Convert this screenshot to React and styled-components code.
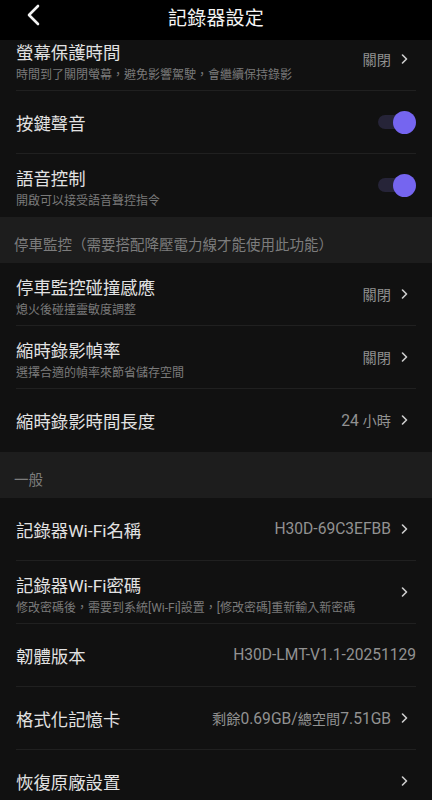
import React from "react";
import styled, { createGlobalStyle } from "styled-components";

const GlobalStyle = createGlobalStyle`
  html, body {
    margin: 0;
    padding: 0;
    background: #111111;
  }
  body {
    font-family: Roboto, "Noto Sans CJK TC", "Noto Sans", sans-serif;
    -webkit-font-smoothing: antialiased;
  }
`;

const sections = [
  {
    title: null,
    rows: [
      { title: "螢幕保護時間", sub: "時間到了關閉螢幕，避免影響駕駛，會繼續保持錄影", value: "關閉", arrow: true },
      { title: "按鍵聲音", toggle: true },
      { title: "語音控制", sub: "開啟可以接受語音聲控指令", toggle: true },
    ],
  },
  {
    title: "停車監控（需要搭配降壓電力線才能使用此功能）",
    rows: [
      { title: "停車監控碰撞感應", sub: "熄火後碰撞靈敏度調整", value: "關閉", arrow: true },
      { title: "縮時錄影幀率", sub: "選擇合適的幀率來節省儲存空間", value: "關閉", arrow: true },
      { title: "縮時錄影時間長度", value: "24 小時", arrow: true },
    ],
  },
  {
    title: "一般",
    rows: [
      { title: "記錄器Wi-Fi名稱", value: "H30D-69C3EFBB", arrow: true },
      { title: "記錄器Wi-Fi密碼", sub: "修改密碼後，需要到系統[Wi-Fi]設置，[修改密碼]重新輸入新密碼", arrow: true },
      { title: "韌體版本", value: "H30D-LMT-V1.1-20251129" },
      { title: "格式化記憶卡", value: "剩餘0.69GB/總空間7.51GB", arrow: true },
      { title: "恢復原廠設置", arrow: true },
    ],
  },
];

// the device draws latin digits a bit larger than the chinese glyphs
const splitCjk = (text) =>
  text.split(/([\u3000-\u9fff\uff00-\uffef]+)/).map((part, i) =>
    /[\u3000-\u9fff\uff00-\uffef]/.test(part) ? <Cjk key={i}>{part}</Cjk> : part
  );

const Chevron = () => (
  <ChevronIcon width="7" height="10" viewBox="0 0 7 10">
    <path d="M1.5 1 L5.5 5 L1.5 9" fill="none" stroke="#cfcfcf" strokeWidth="1.6" strokeLinecap="round" strokeLinejoin="round" />
  </ChevronIcon>
);

const SettingRow = ({ row, last }) => (
  <Row $last={last}>
    <Texts $hasSub={!!row.sub}>
      <Title>{row.title}</Title>
      {row.sub && <Sub>{row.sub}</Sub>}
    </Texts>
    {row.value && <Value>{splitCjk(row.value)}</Value>}
    {row.arrow && <Chevron />}
    {row.toggle && (
      <Toggle>
        <Knob />
      </Toggle>
    )}
  </Row>
);

const App = () => {
  return (
    <Screen>
      <GlobalStyle />
      <Header>
        <BackButton>
          <svg width="16" height="22" viewBox="0 0 16 22">
            <path d="M12 2 L3 11 L12 20" fill="none" stroke="#f2f2f2" strokeWidth="2.6" strokeLinecap="round" strokeLinejoin="round" />
          </svg>
        </BackButton>
        <HeaderTitle>記錄器設定</HeaderTitle>
      </Header>
      <Body>
        <List>
          {sections.map((section, i) => (
            <React.Fragment key={i}>
              {section.title && <SectionHeader>{section.title}</SectionHeader>}
              <Group>
                {section.rows.map((row, j) => (
                  <SettingRow key={j} row={row} last={j === section.rows.length - 1} />
                ))}
              </Group>
            </React.Fragment>
          ))}
        </List>
      </Body>
    </Screen>
  );
};
export default App;

const Screen = styled.div`
  width: 432px;
  height: 800px;
  display: flex;
  flex-direction: column;
  background: #111111;
  overflow: hidden;
`;

const Header = styled.div`
  position: relative;
  z-index: 2;
  height: 40px;
  flex-shrink: 0;
  background: #000000;
  display: flex;
  align-items: center;
  justify-content: center;
`;

const BackButton = styled.div`
  position: absolute;
  left: 26px;
  top: 4px;
  width: 16px;
  height: 22px;
`;

const HeaderTitle = styled.div`
  color: #f4f4f4;
  font-size: 19px;
  line-height: 24px;
  margin-top: -3px;
  letter-spacing: 0.2px;
`;

const Body = styled.div`
  flex: 1;
  overflow: hidden;
`;

const List = styled.div`
  margin-top: -12px;
`;

const SectionHeader = styled.div`
  height: 46px;
  box-sizing: border-box;
  background: #1d1d1d;
  color: #7c7c7c;
  font-size: 14.5px;
  display: flex;
  align-items: flex-end;
  padding: 0 14px 7px;
  line-height: 20px;
`;

const Group = styled.div`
  background: #111111;
`;

const Row = styled.div`
  height: 63px;
  box-sizing: border-box;
  margin: 0 16px;
  display: flex;
  align-items: center;
  border-bottom: 1px solid ${(p) => (p.$last ? "transparent" : "#202020")};
`;

const Texts = styled.div`
  flex: 1;
  min-width: 0;
  display: flex;
  flex-direction: column;
  padding-top: ${(p) => (p.$hasSub ? "6px" : "3px")};
`;

const Title = styled.div`
  color: #e2e2e2;
  font-size: 17.4px;
  line-height: 24px;
  white-space: nowrap;
`;

const Sub = styled.div`
  color: #7a7a7a;
  font-size: 12px;
  line-height: 18px;
  margin-top: 1px;
  white-space: nowrap;
`;

const Value = styled.div`
  color: #929292;
  font-size: 15.6px;
  white-space: nowrap;
`;

const Cjk = styled.span`
  font-size: 14.2px;
`;

const ChevronIcon = styled.svg`
  flex-shrink: 0;
  margin: 0 8px 0 10px;
`;

const Toggle = styled.div`
  position: relative;
  width: 30px;
  height: 14px;
  border-radius: 7px;
  background: #262438;
  margin-right: 8px;
`;

const Knob = styled.div`
  position: absolute;
  right: -8px;
  top: 50%;
  width: 23px;
  height: 23px;
  margin-top: -11.5px;
  border-radius: 50%;
  background: #7565f0;
`;
